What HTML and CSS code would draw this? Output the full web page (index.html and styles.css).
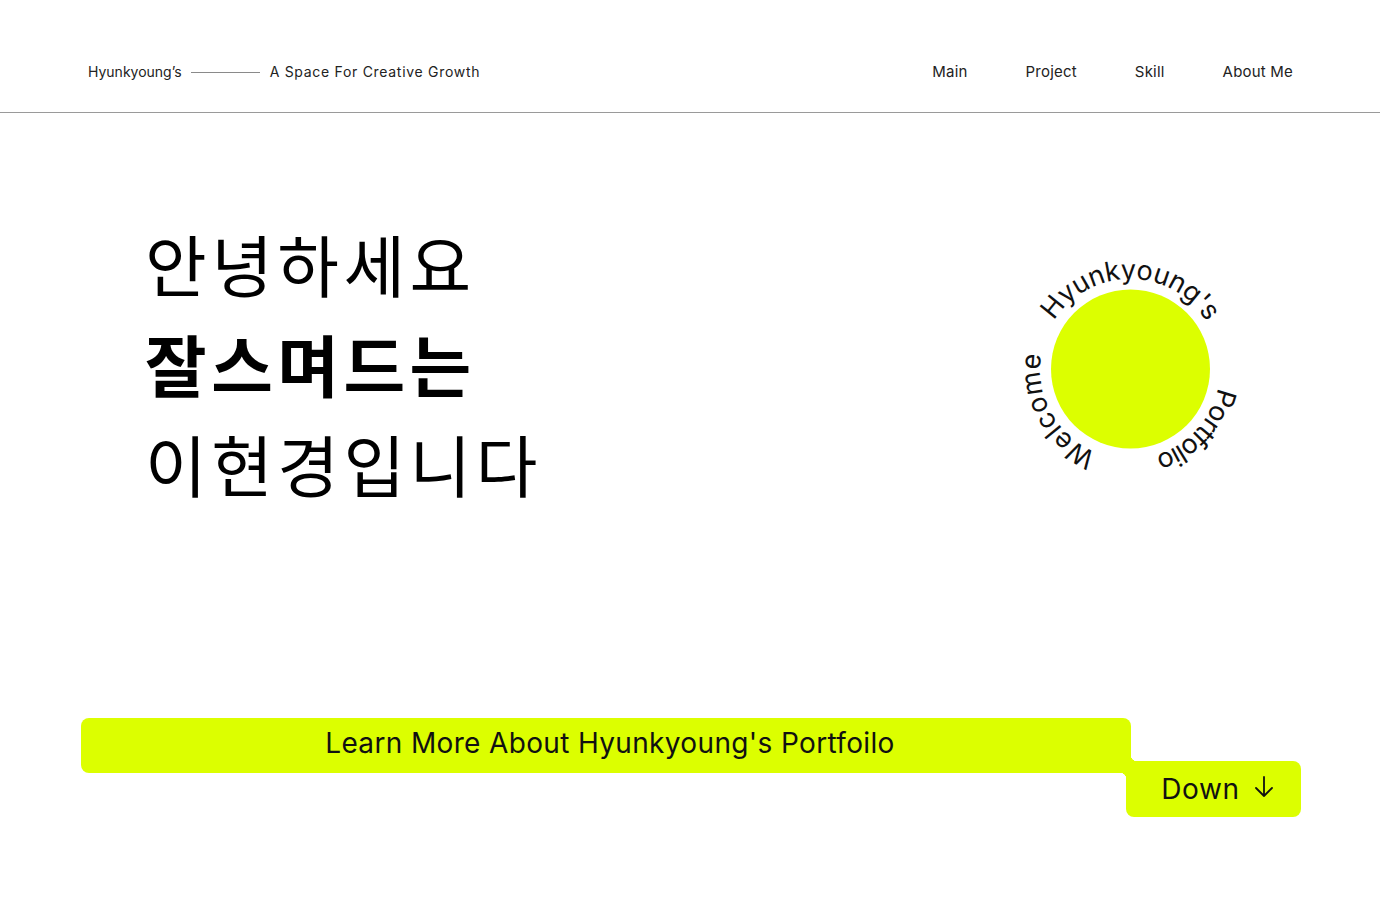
FILE: index.html
```html
<!DOCTYPE html>
<html lang="ko">
<head>
<meta charset="utf-8">
<title>Hyunkyoung's Portfolio</title>
<link rel="stylesheet" href="styles.css">
</head>
<body>
<header class="header">
  <div class="brand">
    <span class="brand-name">Hyunkyoung’s</span>
    <span class="brand-line"></span>
    <span class="brand-tag">A Space For Creative Growth</span>
  </div>
  <nav class="nav">
    <a class="nav-link" href="#">Main</a>
    <a class="nav-link" href="#">Project</a>
    <a class="nav-link" href="#">Skill</a>
    <a class="nav-link" href="#">About Me</a>
  </nav>
</header>
<main>
  <section class="hero">
    <h1 class="hero-title">
      <span class="line">안녕하세요</span>
      <span class="line bold">잘스며드는</span>
      <span class="line">이현경입니다</span>
    </h1>
    <svg class="badge" width="260" height="260" viewBox="0 0 260 260">
      <defs>
        <path id="ring" d="M130,220 A90,90 0 1,1 130,40 A90,90 0 1,1 130,220"/>
      </defs>
      <circle cx="130.5" cy="130" r="79.5" fill="#dcff00"/>
      <text class="ring-text"><textPath href="#ring" startOffset="34" textLength="122" lengthAdjust="spacing">Welcome</textPath></text>
      <text class="ring-text"><textPath href="#ring" startOffset="192" textLength="182" lengthAdjust="spacing">Hyunkyoung's</textPath></text>
      <text class="ring-text"><textPath href="#ring" startOffset="442" textLength="97" lengthAdjust="spacing">Portfolio</textPath></text>
    </svg>
  </section>
  <section class="cta">
    <div class="cta-bar">Learn More About Hyunkyoung's Portfoilo</div>
    <div class="cta-down">
      <span>Down</span>
      <svg class="arrow" width="20" height="22" viewBox="0 0 20 22">
        <path d="M10 1 V20 M2 12 L10 20 L18 12" fill="none" stroke="#111" stroke-width="1.8" stroke-linecap="round" stroke-linejoin="round"/>
      </svg>
    </div>
  </section>
</main>
</body>
</html>
```
FILE: styles.css
```css
* { box-sizing: border-box; }
html, body { margin: 0; padding: 0; background: #fff; }
body {
  font-family: Inter, "Noto Sans", "Noto Sans CJK KR", sans-serif;
  color: #111;
}
.header {
  display: flex;
  justify-content: space-between;
  align-items: center;
  padding: 60px 87px 28px 88px;
  border-bottom: 1px solid #9a9a9a;
  height: 113px;
}
.brand {
  display: flex;
  align-items: center;
  font-size: 14px;
  line-height: 24px;
  color: #222;
}
.brand-name { letter-spacing: 0; }
.brand-tag { letter-spacing: 0.7px; }
.brand-line {
  width: 69px;
  height: 1px;
  background: #8a8a8a;
  margin: 0 10px 0 9px;
}
.nav {
  display: flex;
  gap: 58px;
}
.nav-link {
  font-size: 15px;
  letter-spacing: 0.2px;
  line-height: 24px;
  color: #222;
  text-decoration: none;
}
.hero {
  display: flex;
  justify-content: space-between;
  align-items: flex-start;
  padding: 100px 120px 0 145px;
}
.hero-title {
  margin: 0;
  font-family: "Noto Sans CJK KR", sans-serif;
  font-weight: 400;
  font-size: 67px;
  letter-spacing: 4.5px;
  line-height: 100px;
  color: #000;
}
.hero-title .line { display: block; }
.hero-title .bold { font-weight: 700; }
.badge { margin-top: 26px; display: block; }
.ring-text {
  font-family: Inter, sans-serif;
  font-size: 27px;
  fill: #111;
}
.cta {
  display: flex;
  flex-direction: column;
  width: 1220px;
  margin: 205px 0 0 81px;
}
.cta-bar {
  width: 1050px;
  height: 55px;
  background: #dcff00;
  border-radius: 8px 8px 0 8px;
  text-align: center;
  font-size: 28px;
  letter-spacing: 0.35px;
  line-height: 50px;
  color: #111;
  padding-left: 8px;
}
.cta-down {
  position: relative;
  align-self: flex-end;
  width: 175px;
  height: 56px;
  margin-top: -12px;
  background: #dcff00;
  border-radius: 0 8px 8px 8px;
  display: flex;
  align-items: center;
  justify-content: center;
  gap: 14px;
  padding: 0 0 0 8px;
  font-size: 28px;
  letter-spacing: 0.6px;
  color: #111;
}
.cta-down::before {
  content: "";
  position: absolute;
  left: 5px;
  top: -6px;
  width: 6px;
  height: 6px;
  background: radial-gradient(circle at 100% 0, transparent 6px, #dcff00 6.5px);
}
.cta-down::after {
  content: "";
  position: absolute;
  left: -6px;
  top: 12px;
  width: 6px;
  height: 6px;
  background: radial-gradient(circle at 0 100%, transparent 6px, #dcff00 6.5px);
}
.arrow { display: block; margin-top: -4px; }
```
